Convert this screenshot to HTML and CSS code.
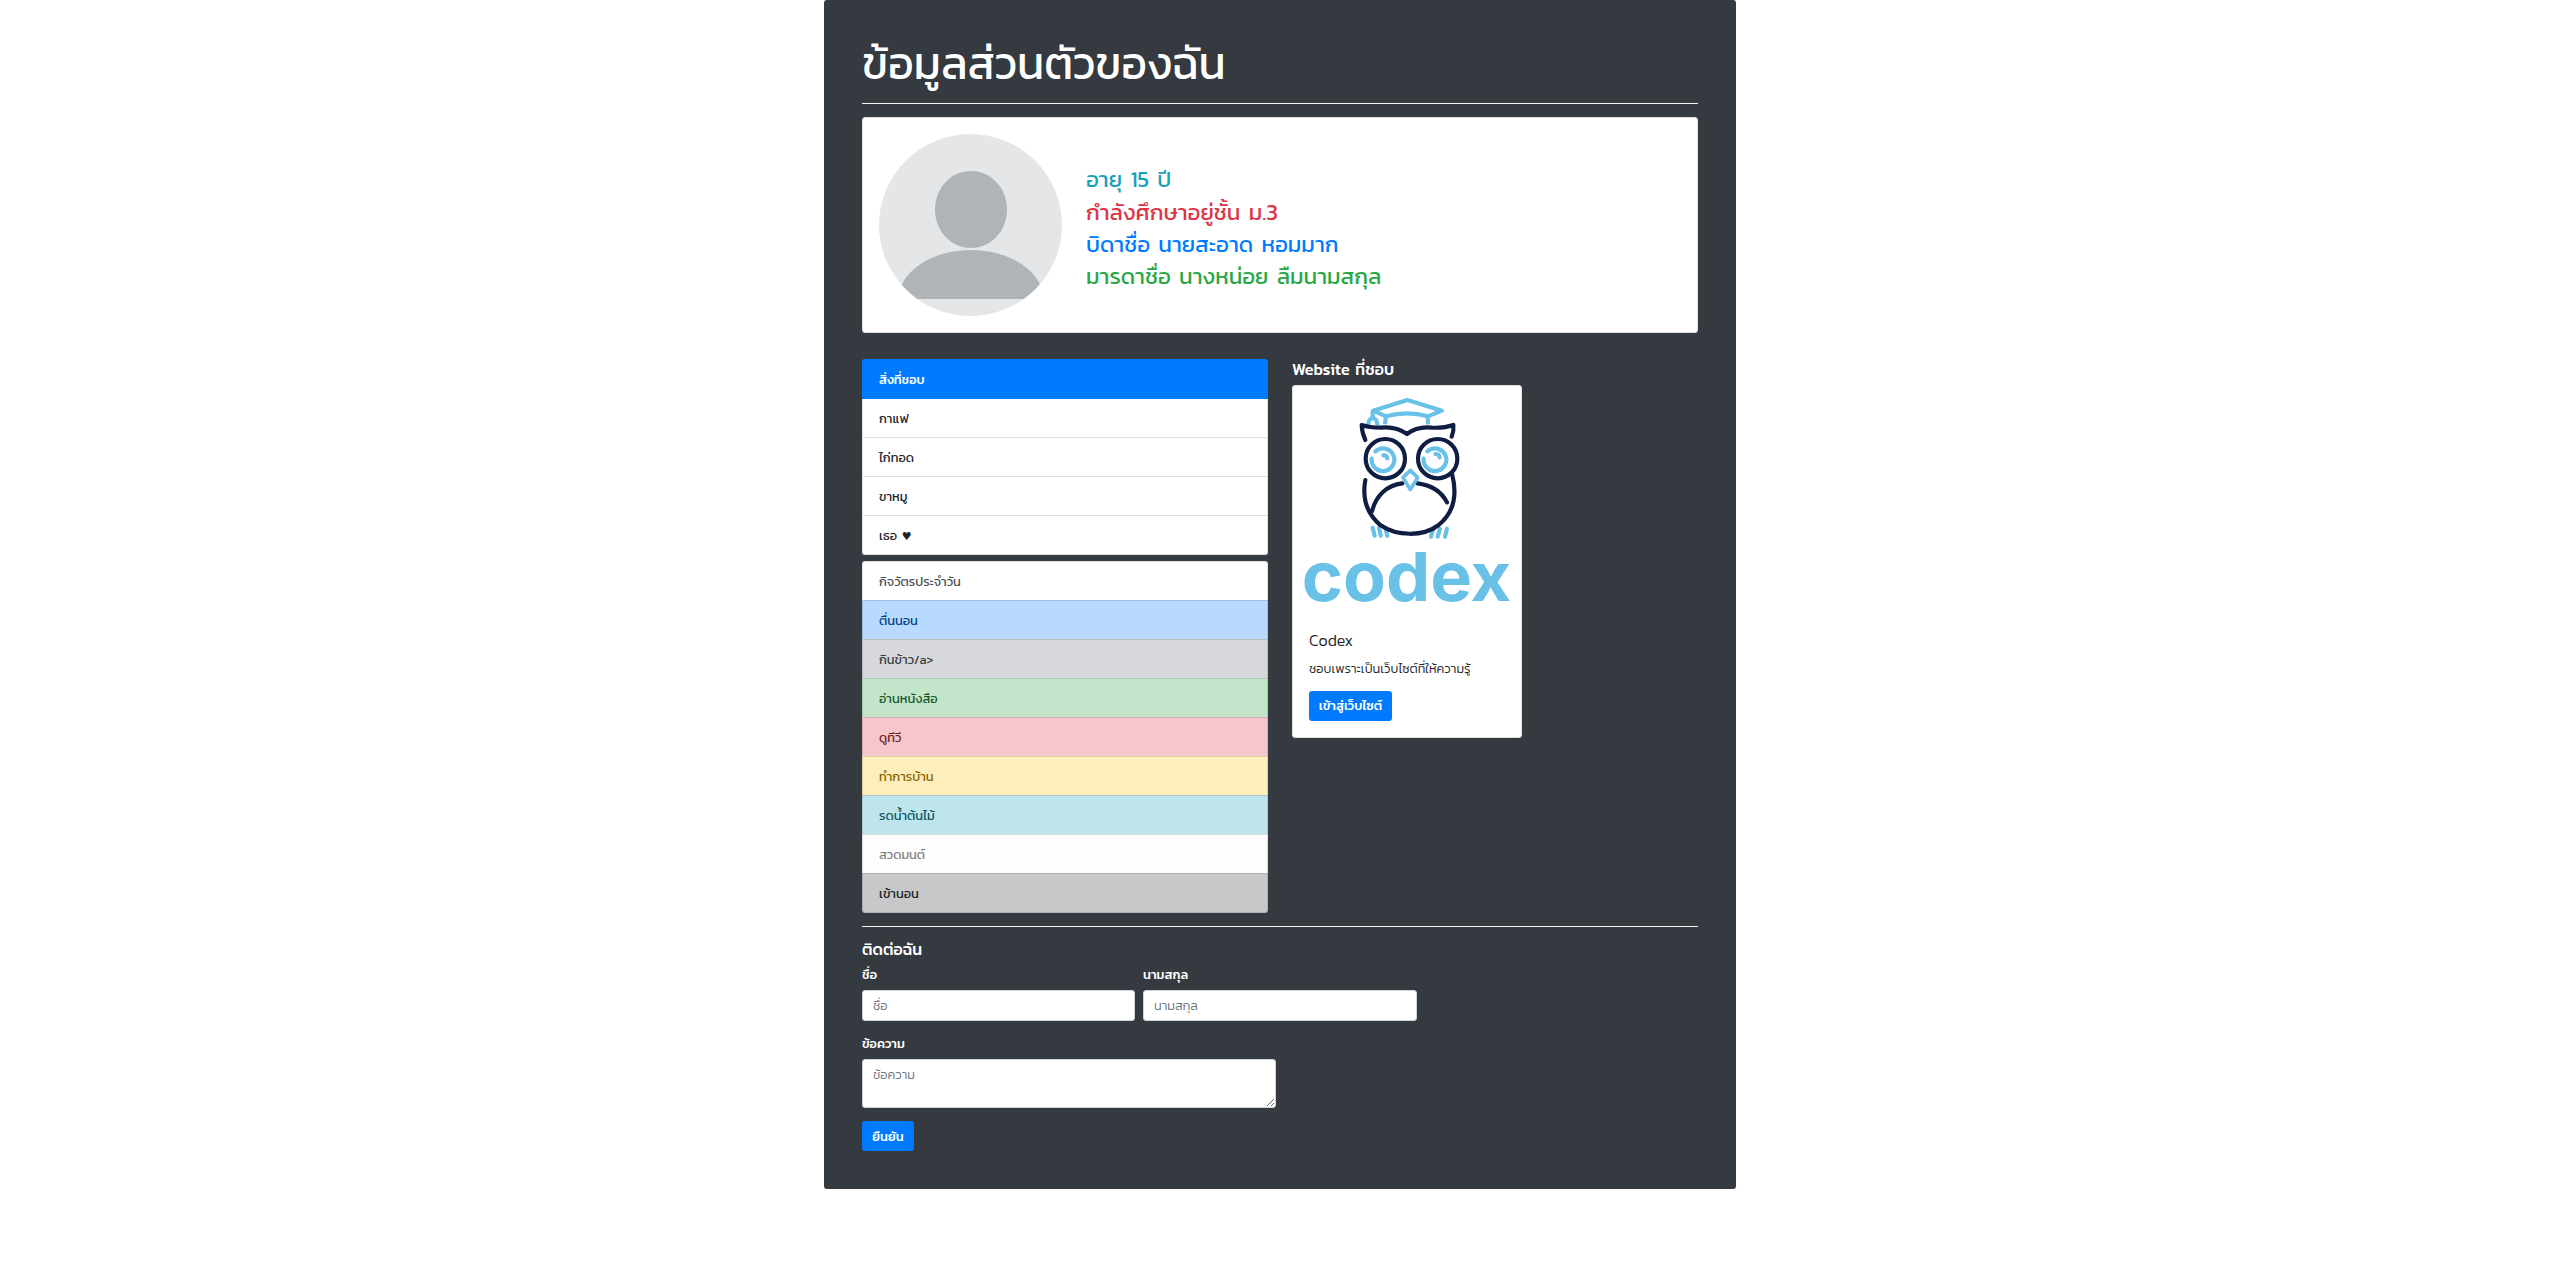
FILE: index.html
```html
<!DOCTYPE html>
<html lang="th">
<head>
<meta charset="utf-8">
<title>ข้อมูลส่วนตัวของฉัน</title>
<link rel="stylesheet" href="styles.css">
</head>
<body>
<main class="page">
  <h1 class="page-title">ข้อมูลส่วนตัวของฉัน</h1>
  <hr class="rule">
  <section class="profile">
    <svg class="avatar" viewBox="0 0 183 182" aria-hidden="true">
      <defs><clipPath id="round"><ellipse cx="91.5" cy="91" rx="91.5" ry="91"/></clipPath></defs>
      <g clip-path="url(#round)">
        <rect width="183" height="182" fill="#e4e6e7"/>
        <path d="M92 37c20 0 36 17 36 38.500s-16 38.500-36 38.500-36-17-36-38.500S72 37 92 37z" fill="#aeb4b7"/>
        <path d="M19 165c2-28 34-49 73-49s71 21 73 49z" fill="#aeb4b7"/>
      </g>
    </svg>
    <div class="facts">
      <p class="info">อายุ 15 ปี</p>
      <p class="danger">กำลังศึกษาอยู่ชั้น ม.3</p>
      <p class="primary">บิดาชื่อ นายสะอาด หอมมาก</p>
      <p class="success">มารดาชื่อ นางหน่อย ลืมนามสกุล</p>
    </div>
  </section>
  <div class="columns">
    <div class="lists">
      <ul class="list likes">
        <li class="active">สิ่งที่ชอบ</li>
        <li>กาแฟ</li>
        <li>ไก่ทอด</li>
        <li>ขาหมู</li>
        <li>เธอ <span class="heart">♥</span></li>
      </ul>
      <ul class="list routine">
        <li class="r-plain">กิจวัตรประจำวัน</li>
        <li class="r-primary">ตื่นนอน</li>
        <li class="r-secondary">กินข้าว/a&gt;</li>
        <li class="r-success">อ่านหนังสือ</li>
        <li class="r-danger">ดูทีวี</li>
        <li class="r-warning">ทำการบ้าน</li>
        <li class="r-info">รดน้ำต้นไม้</li>
        <li class="r-light">สวดมนต์</li>
        <li class="r-dark">เข้านอน</li>
      </ul>
    </div>
    <div class="site">
      <h2 class="heading">Website ที่ชอบ</h2>
      <article class="card">
        <svg class="logo" viewBox="39 138 684 684" role="img">
          <g fill="none" stroke="#69c1e8" stroke-width="12.500" stroke-linecap="round" stroke-linejoin="round">
            <path d="M279 212L382 180L486 212L443 229Q382 211 318 229Z"/>
            <path d="M318 229L315 253M443 229L444 253M278 214V232" stroke-linecap="butt"/>
            <path d="M264 256Q266 235 279 234Q291 236 292 256" stroke-linecap="butt"/>
            <path d="M286 334A34 34 0 1 1 275 356M442 334A34 34 0 1 1 431 356"/>
            <path d="M310 346Q321 345 322 355M466 342Q478 342 479 352"/>
            <path d="M278 563L284 587M297 563L302 587M316 564L322 587M460 566L453 590M480 566L473 590M501 566L495 590"/>
          </g>
          <g fill="none" stroke="#101d42" stroke-width="12.500" stroke-linecap="round" stroke-linejoin="round">
            <path d="M256 300Q246 280 245 255Q267 263 303 263Q347 258 381 282Q412 258 456 263Q492 265 520 255Q522 273 515 290"/>
            <circle cx="316" cy="356" r="59"/><circle cx="473" cy="356" r="59"/>
            <path d="M256 420C247 470 256 518 302 556C350 589 429 591 476 555C525 515 532 462 516 401"/>
            <path d="M276 514C287 468 320 435 367 430M412 430C453 435 485 456 501 487"/>
          </g>
          <path d="M391 391L413 413L391 449L369 413Z" fill="#fff" stroke="#69c1e8" stroke-width="11" stroke-linejoin="round"/>
          <text class="wordmark" x="65" y="782" textLength="629" lengthAdjust="spacingAndGlyphs">codex</text>
        </svg>
        <div class="card-body">
          <h3>Codex</h3>
          <p>ชอบเพราะเป็นเว็บไซต์ที่ให้ความรู้</p>
          <a class="button visit">เข้าสู่เว็บไซต์</a>
        </div>
      </article>
    </div>
  </div>
  <hr class="rule">
  <form class="contact">
    <h2 class="heading">ติดต่อฉัน</h2>
    <div class="names">
      <label>ชื่อ<input type="text" placeholder="ชื่อ"></label>
      <label>นามสกุล<input type="text" placeholder="นามสกุล"></label>
    </div>
    <label class="message">ข้อความ<textarea placeholder="ข้อความ"></textarea></label>
    <button class="button submit" type="button">ยืนยัน</button>
  </form>
</main>
</body>
</html>
```
FILE: styles.css
```css
* { box-sizing: border-box; }
body {
  margin: 0;
  background: #fff;
  color: #212529;
  font: 300 12.8px/19px Kanit, "Noto Sans Thai", "Noto Sans", sans-serif;
}
h1, h2, h3, p, ul { margin: 0; padding: 0; font-weight: 400; }
.page {
  width: 912px;
  height: 1189px;
  margin: 0 auto;
  padding: 38px;
  background: #343a40;
  border-radius: 3px;
  color: #fff;
}
.page-title { height: 65px; font-size: 44.8px; line-height: 52px; white-space: nowrap; }
.rule { height: 1px; margin: 0; border: 0; background: #f4f4f2; }
.profile {
  display: flex;
  align-items: center;
  height: 216px;
  margin-top: 13px;
  padding: 0 16px;
  gap: 24px;
  background: #fff;
  border: 1px solid #dfdfdf;
  border-radius: 3px;
}
.avatar { width: 183px; height: 182px; }
.facts { padding-top: 6px; font-size: 22.4px; line-height: 32.4px; white-space: nowrap; word-spacing: .14em; }
.info { color: #17a2b8; }
.danger { color: #dc3545; }
.primary { color: #007bff; }
.success { color: #28a745; }

.columns { display: flex; gap: 24px; margin-top: 26px; height: 567px; }
.lists { width: 406px; }
.list { list-style: none; }
.list + .list { margin-top: 6px; }
.list li {
  height: 39px;
  padding: 10px 16px 9px;
  background: #fff;
  border: 1px solid #dfdfdf;
  border-top-width: 0;
  color: #212529;
  line-height: 19px;
  word-spacing: .14em;
}
.list li:first-child { border-radius: 3px 3px 0 0; }
.list li:last-child { border-radius: 0 0 3px 3px; }
.list li.active { height: 40px; padding-top: 11px; background: #007bff; border-color: #007bff; color: #fff; font-weight: 500; }
.heart { font-family: "DejaVu Sans", sans-serif; font-size: 11px; line-height: 1; }
.routine li { border-color: rgba(0, 0, 0, .125); border-width: 1px 1px 0; padding-top: 10px; }
.routine li:last-child { height: 40px; border-bottom-width: 1px; }
.routine .r-plain { color: #495057; }
.routine .r-primary { background: #b8daff; color: #004085; }
.routine .r-secondary { background: #d6d8db; color: #383d41; }
.routine .r-success { background: #c3e6cb; color: #155724; }
.routine .r-danger { background: #f5c6cb; color: #721c24; }
.routine .r-warning { background: #ffeeba; color: #856404; }
.routine .r-info { background: #bee5eb; color: #0c5460; }
.routine .r-light { background: #fdfdfe; color: #818182; }
.routine .r-dark { background: #c6c8ca; color: #1b1e21; }

.heading { font-size: 16px; font-weight: 500; line-height: 20px; white-space: nowrap; word-spacing: .14em; }
.site { width: 230px; }
.card { height: 353px; margin-top: 6px; background: #fff; border: 1px solid #dfdfdf; border-radius: 3px; color: #212529; }
.logo { display: block; width: 228px; height: 228px; }
.wordmark { font: 700 204px Inter, sans-serif; fill: #69c1e8; }
.card-body { padding: 16px; white-space: nowrap; }
.card-body h3 { height: 29px; font-size: 16px; font-weight: 300; line-height: 20px; }
.card-body p { height: 32px; font-weight: 300; line-height: 20px; }
.button {
  display: block;
  height: 30px;
  padding: 0;
  border: 0;
  border-radius: 3px;
  background: #007bff;
  color: #fff;
  font: 500 12.8px/29px Kanit, "Noto Sans Thai", "Noto Sans", sans-serif;
  text-align: center;
  white-space: nowrap;
}
.visit { width: 83px; }
.submit { width: 52px; margin-top: 13px; }

.contact { padding-top: 12px; }
.names { display: flex; gap: 8px; margin-top: 6px; }
label { display: block; width: 273px; font-weight: 500; line-height: 19px; }
label + label { width: 274px; }
input, textarea {
  display: block;
  width: 100%;
  height: 31px;
  margin: 6px 0 0;
  padding: 5px 10px;
  background: #fff;
  border: 1px solid #ced4da;
  border-radius: 3px;
  font: 300 12.8px/19px Kanit, "Noto Sans Thai", "Noto Sans", sans-serif;
}
::placeholder { color: #6c757d; opacity: 1; }
label.message { width: 414px; margin-top: 13px; }
textarea { height: 49px; resize: both; overflow: auto; }
```
